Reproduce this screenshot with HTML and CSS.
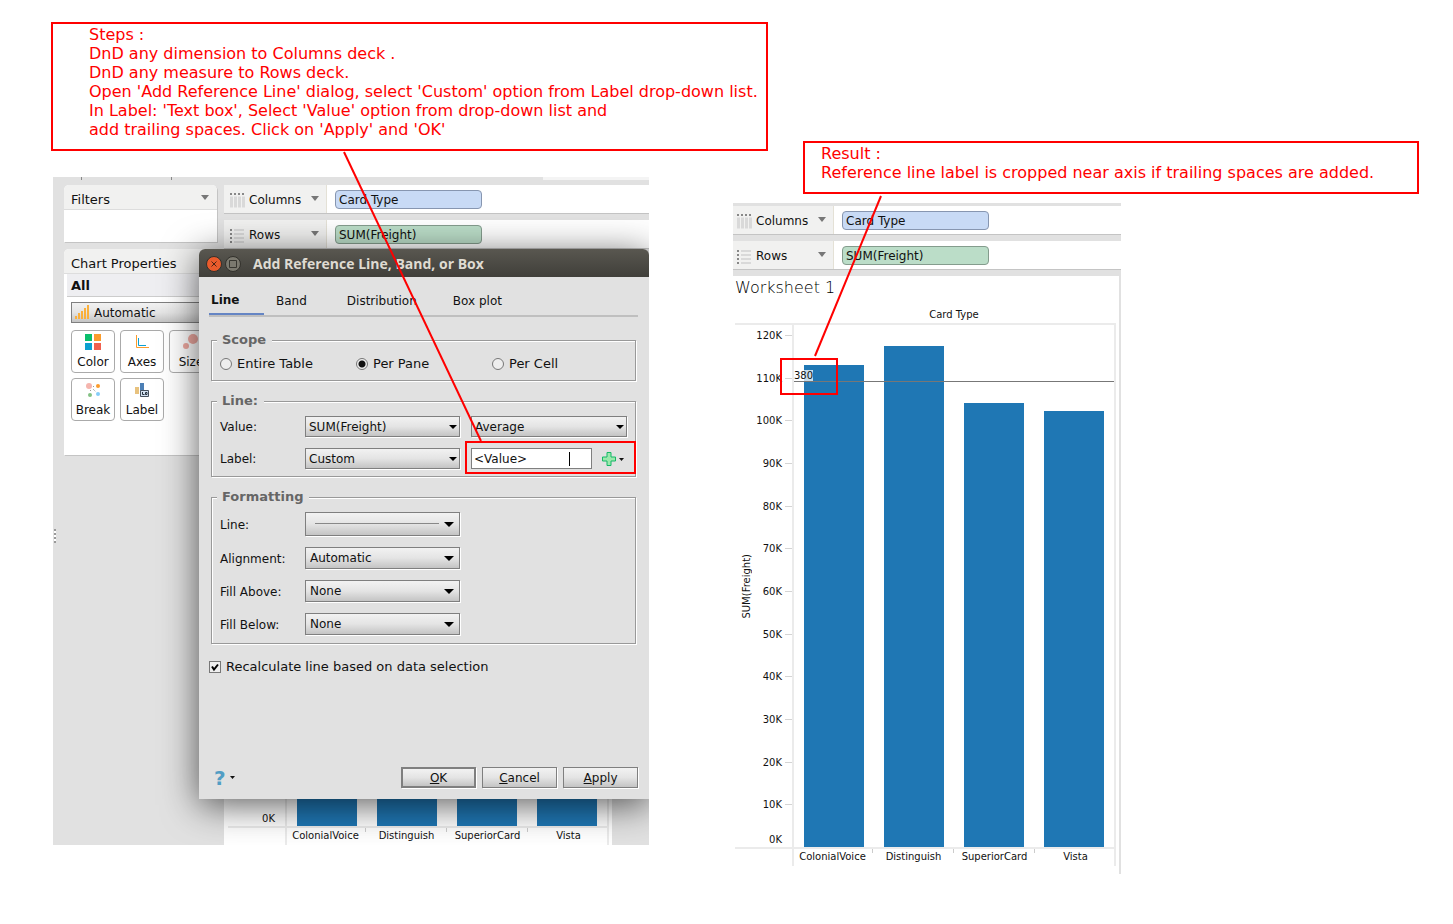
FILE: index.html
```
<!DOCTYPE html>
<html lang="en">
<head>
    <meta charset="UTF-8">
    <meta name="viewport" content="width=device-width, initial-scale=1.0">
    <title>Reference line label is cropped</title>
    <link rel="stylesheet" href="styles.css">
</head>
<body>
    <main class="board">
        <section class="steps">
            <div class="note steps-note">
                <p>Steps :</p>
                <p>DnD any dimension to Columns deck .</p>
                <p>DnD any measure to Rows deck.</p>
                <p>Open 'Add Reference Line' dialog, select 'Custom' option from Label drop-down list.</p>
                <p>In Label: 'Text box', Select 'Value' option from drop-down list and</p>
                <p>add trailing spaces. Click on 'Apply' and 'OK'</p>
                <svg class="pointer steps-pointer" width="140" height="292" viewBox="0 0 140 292"><path d="M1 1L138 290" stroke="#f00" stroke-width="2"/></svg>
            </div>

            <div class="app">
                <aside class="sidebar">
                    <div class="panel filters">
                        <div class="panel-title">Filters <i class="caret"></i></div>
                    </div>
                    <div class="panel properties">
                        <div class="panel-title">Chart Properties</div>
                        <div class="panel-group">All</div>
                        <div class="panel-body">
                            <div class="chart-type">
                                <select class="select" aria-label="Chart type"><option>Automatic</option></select>
                                <svg width="14" height="14" viewBox="0 0 14 14" fill="#fbb03b"><path d="M0 11h2v3H0zM3 8h2v6H3zM6 6h2v8H6zM9 3h2v11H9zM12 0h2v14h-2z"/></svg>
                            </div>
                            <div class="tools">
                                <button class="tool"><svg width="18" height="18" viewBox="0 0 18 18"><path fill="#0bbf6c" d="M1 1h7v7H1z"/><path fill="#fb9c2d" d="M10 1h7v7h-7z"/><path fill="#0ba0d0" d="M1 10h7v7H1z"/><path fill="#f0604f" d="M10 10h7v7h-7z"/></svg>Color</button>
                                <button class="tool"><svg width="18" height="18" viewBox="0 0 18 18" fill="none"><path d="M3.500 2v12.500H16" stroke="#fb9c2d"/><path d="M5.500 5v7.500H13" stroke="#0ba0d0"/></svg>Axes</button>
                                <button class="tool"><svg width="18" height="18" viewBox="0 0 18 18" fill="#f0aaa2"><circle cx="11" cy="6" r="5"/><circle cx="4" cy="13" r="3"/></svg>Size</button>
                                <button class="tool"><svg width="18" height="18" viewBox="0 0 18 18"><circle cx="5" cy="5" r="3" fill="#f5b5ae"/><circle cx="14" cy="5" r="2" fill="#fb9c2d"/><circle cx="6" cy="14" r="2" fill="#83c184"/><circle cx="14" cy="13" r="2" fill="#85cdf8"/><path d="M9 5.500h2M6.500 9v2M9 8l3 3" stroke="#999" stroke-dasharray="1 1"/></svg>Break</button>
                                <button class="tool"><svg width="18" height="18" viewBox="0 0 18 18"><path fill="#e8c27e" d="M2 6h4v7H2z"/><path fill="#4c7fb5" d="M7 2h4v8H7z"/><path d="M7.500 9.500h8v6h-8z" fill="#d5e3f2" stroke="#46505c"/><path d="M9.500 11v2.500h2M12.500 11.500h1.500v2h-1.500z" fill="none" stroke="#25303c"/></svg>Label</button>
                            </div>
                        </div>
                    </div>
                </aside>

                <div class="sheet">
                    <div class="shelf">
                        <div class="shelf-name">
                            <svg width="15" height="15" viewBox="0 0 15 15"><path d="M0 1h15" stroke="#888" stroke-width="2" stroke-dasharray="2 2"/><path d="M0 9h15" stroke="#d9d9d9" stroke-width="11" stroke-dasharray="3 1"/></svg>
                            Columns <i class="caret"></i>
                        </div>
                        <div class="pill dimension">Card Type</div>
                    </div>
                    <div class="shelf">
                        <div class="shelf-name">
                            <svg width="15" height="15" viewBox="0 0 15 15"><path d="M1 1v14" stroke="#888" stroke-width="2" stroke-dasharray="2 2"/><path d="M4 2h10M4 6h10M4 10h10M4 14h10" stroke="#d9d9d9" stroke-width="2"/></svg>
                            Rows <i class="caret"></i>
                        </div>
                        <div class="pill measure">SUM(Freight)</div>
                    </div>
                    <div class="chart">
                        <div class="chart-head"></div>
                        <div class="plot">
                            <div class="axis">
                                <ul class="ticks"><li class="zero">0K</li></ul>
                            </div>
                            <div class="bars">
                                <i style="height: 482px"></i>
                                <i style="height: 501px"></i>
                                <i style="height: 444px"></i>
                                <i style="height: 436px"></i>
                            </div>
                        </div>
                        <div class="names"><span>ColonialVoice</span><span>Distinguish</span><span>SuperiorCard</span><span>Vista</span></div>
                    </div>
                </div>

                <div class="grip"></div>

                <form class="dialog">
                    <header class="titlebar">
                        <button type="button" class="win-button close" aria-label="Close"><svg width="16" height="16" viewBox="0 0 16 16"><circle cx="8" cy="8" r="7.500" fill="#ea5b2c" stroke="#32312c"/><path d="M5.500 5.500l5 5M10.500 5.500l-5 5" stroke="#4a2416"/></svg></button>
                        <button type="button" class="win-button" aria-label="Maximize"><svg width="16" height="16" viewBox="0 0 16 16"><circle cx="8" cy="8" r="7.500" fill="#7b796f" stroke="#32312c"/><path d="M4.500 4.500h7v7h-7z" fill="none" stroke="#383731"/></svg></button>
                        <h1>Add Reference Line, Band, or Box</h1>
                    </header>
                    <nav class="tabs">
                        <button type="button" class="tab active">Line</button>
                        <button type="button" class="tab">Band</button>
                        <button type="button" class="tab">Distribution</button>
                        <button type="button" class="tab">Box plot</button>
                    </nav>
                    <fieldset class="scope">
                        <legend>Scope</legend>
                        <label><input type="radio" name="scope"> Entire Table</label>
                        <label><input type="radio" name="scope" checked> Per Pane</label>
                        <label><input type="radio" name="scope"> Per Cell</label>
                    </fieldset>
                    <fieldset class="line">
                        <legend>Line:</legend>
                        <div class="row">
                            <label for="value">Value:</label>
                            <select class="select" id="value"><option>SUM(Freight)</option></select>
                            <select class="select" aria-label="Aggregation"><option>Average</option></select>
                        </div>
                        <div class="row">
                            <label for="label">Label:</label>
                            <select class="select" id="label"><option>Custom</option></select>
                            <div class="custom">
                                <input class="text" type="text" value="&lt;Value&gt;" aria-label="Label text">
                                <span class="cursor"></span>
                                <button type="button" class="menu-button" aria-label="Insert"><svg width="22" height="14" viewBox="0 0 22 14"><path d="M5 .5h4V5h4.500v4H9v4.500H5V9H.5V5H5z" fill="#9be8ac" stroke="#12b866"/><path d="M17 6h5l-2.500 3z" fill="#111"/></svg></button>
                                <span class="mark label-mark"></span>
                            </div>
                        </div>
                    </fieldset>
                    <fieldset class="formatting">
                        <legend>Formatting</legend>
                        <div class="row">
                            <label for="stroke">Line:</label>
                            <select class="select wide-arrow stroke" id="stroke"><option></option></select>
                        </div>
                        <div class="row">
                            <label for="alignment">Alignment:</label>
                            <select class="select wide-arrow" id="alignment"><option>Automatic</option></select>
                        </div>
                        <div class="row">
                            <label for="above">Fill Above:</label>
                            <select class="select wide-arrow" id="above"><option>None</option></select>
                        </div>
                        <div class="row">
                            <label for="below">Fill Below:</label>
                            <select class="select wide-arrow" id="below"><option>None</option></select>
                        </div>
                    </fieldset>
                    <label class="recalculate"><input type="checkbox" checked> Recalculate line based on data selection</label>
                    <footer class="actions">
                        <button type="button" class="help"><b>?</b><svg width="5" height="3" viewBox="0 0 5 3"><path d="M0 0h5L2.500 3z" fill="#111"/></svg></button>
                        <button type="button" class="button default"><u>O</u>K</button>
                        <button type="button" class="button"><u>C</u>ancel</button>
                        <button type="button" class="button"><u>A</u>pply</button>
                    </footer>
                </form>
            </div>
        </section>

        <section class="result">
            <div class="note result-note">
                <p>Result :</p>
                <p>Reference line label is cropped near axis if trailing spaces are added.</p>
                <svg class="pointer result-pointer" width="70" height="164" viewBox="0 0 70 164"><path d="M68 2L2 162" stroke="#f00" stroke-width="2"/></svg>
            </div>

            <div class="sheet cropped">
                <div class="shelf">
                    <div class="shelf-name">
                        <svg width="15" height="15" viewBox="0 0 15 15"><path d="M0 1h15" stroke="#888" stroke-width="2" stroke-dasharray="2 2"/><path d="M0 9h15" stroke="#d9d9d9" stroke-width="11" stroke-dasharray="3 1"/></svg>
                        Columns <i class="caret"></i>
                    </div>
                    <div class="pill dimension">Card Type</div>
                </div>
                <div class="shelf">
                    <div class="shelf-name">
                        <svg width="15" height="15" viewBox="0 0 15 15"><path d="M1 1v14" stroke="#888" stroke-width="2" stroke-dasharray="2 2"/><path d="M4 2h10M4 6h10M4 10h10M4 14h10" stroke="#d9d9d9" stroke-width="2"/></svg>
                        Rows <i class="caret"></i>
                    </div>
                    <div class="pill measure">SUM(Freight)</div>
                </div>
                <div class="chart">
                    <div class="chart-head">
                        <h2>Worksheet 1</h2>
                        <p>Card Type</p>
                    </div>
                    <div class="plot">
                        <div class="axis">
                            <span class="axis-title">SUM(Freight)</span>
                            <ul class="ticks">
                                <li>120K</li>
                                <li>110K</li>
                                <li>100K</li>
                                <li>90K</li>
                                <li>80K</li>
                                <li>70K</li>
                                <li>60K</li>
                                <li>50K</li>
                                <li>40K</li>
                                <li>30K</li>
                                <li>20K</li>
                                <li>10K</li>
                                <li class="zero">0K</li>
                            </ul>
                        </div>
                        <div class="bars">
                            <i style="height: 482px"></i>
                            <i style="height: 501px"></i>
                            <i style="height: 444px"></i>
                            <i style="height: 436px"></i>
                            <div class="reference-line"><span>380</span></div>
                            <span class="mark crop-mark"></span>
                        </div>
                    </div>
                    <div class="names"><span>ColonialVoice</span><span>Distinguish</span><span>SuperiorCard</span><span>Vista</span></div>
                </div>
            </div>
        </section>
    </main>
</body>
</html>
```
FILE: styles.css
```
* {
    margin: 0;
    padding: 0;
    box-sizing: border-box;
}

body {
    background-color: #fff;
    color: #111;
    font-family: "DejaVu Sans", Verdana, sans-serif;
    font-size: 13px;
}

button, input, select {
    font: inherit;
    color: inherit;
}

button {
    background: none;
    border: none;
}

ul {
    list-style: none;
}

.board {
    display: flex;
    align-items: flex-start;
    padding: 22px 34px 50px 51px;
}

.steps {
    flex: 682 1 0;
    min-width: 0;
}

.result {
    flex: 686 1 0;
    min-width: 0;
    padding-top: 119px;
}

/* red annotations */
.note {
    position: relative;
    border: 2px solid #f00;
    padding: 1px 8px 10px 36px;
    color: #f00;
    font-size: 16px;
    line-height: 19px;
}

.steps-note {
    width: max-content;
    z-index: 5;
}

.result-note {
    margin: 0 0 9px 70px;
    padding-left: 16px;
    z-index: 5;
}

.pointer {
    position: absolute;
    pointer-events: none;
}

.steps-pointer {
    left: 290px;
    top: 127px;
}

.result-pointer {
    left: 8px;
    top: 51px;
}

.mark {
    position: absolute;
    border: 2px solid #f00;
    pointer-events: none;
}

/* application window */
.app {
    position: relative;
    display: flex;
    gap: 7px;
    width: 87.4%;
    margin: 26px 0 0 2px;
    padding: 8px 0 0 11px;
    background:
        linear-gradient(#888, #888) 28px 0 / 1px 3px no-repeat,
        linear-gradient(#888, #888) 118px 0 / 1px 3px no-repeat,
        linear-gradient(#f4f4f4, #f4f4f4) 490px 0 / 106px 3px no-repeat,
        #e1e1e1;
    overflow: hidden;
}

.sidebar {
    flex: 0 0 153px;
}

.panel {
    background-color: #fff;
    border-radius: 5px 5px 0 0;
    box-shadow: 1px 1px 0 #c4c4c4;
    overflow: hidden;
}

.filters {
    height: 57px;
    margin-bottom: 7px;
}

.properties {
    height: 206px;
}

.panel-title {
    display: flex;
    justify-content: space-between;
    align-items: center;
    height: 25px;
    padding: 4px 8px 0 7px;
    background-color: #f1f1f0;
    border-bottom: 1px solid #ddd;
}

.panel-group {
    height: 23px;
    margin-left: 3px;
    padding-left: 4px;
    line-height: 24px;
    font-weight: bold;
    background-color: #eeeef1;
    border-bottom: 1px solid #ccc;
}

.panel-body {
    padding: 5px 0 0 7px;
}

.caret {
    border: 4px solid transparent;
    border-top: 5px solid #777;
    border-bottom: none;
}

.panel-title .caret {
    margin-bottom: 4px;
}

.chart-type {
    position: relative;
    display: flex;
}

.chart-type .select {
    flex: 1;
    padding-left: 22px;
}

.chart-type svg {
    position: absolute;
    left: 4px;
    top: 3px;
}

.tools {
    display: grid;
    grid-template-columns: repeat(3, 44px);
    gap: 5px;
    margin-top: 7px;
}

.tool {
    display: flex;
    flex-direction: column;
    align-items: center;
    gap: 3px;
    height: 43px;
    padding-top: 2px;
    border: 1px solid #aaa;
    border-radius: 4px;
    background-color: #fff;
    font-size: 12px;
    line-height: 16px;
}

.grip {
    position: absolute;
    left: 1px;
    top: 352px;
    width: 2px;
    height: 14px;
    background: repeating-linear-gradient(#999 0 2px, #fff 2px 4px);
}

/* worksheet */
.sheet {
    flex: 1;
    min-width: 0;
}

.shelf {
    display: flex;
    align-items: center;
    height: 28px;
    margin-bottom: 7px;
    background-color: #fff;
    box-shadow: 0 1px 0 #c4c4c4;
    font-size: 12px;
}

.shelf-name {
    display: flex;
    align-items: center;
    align-self: stretch;
    gap: 4px;
    width: 103px;
    margin-right: 8px;
    padding: 2px 7px 0 6px;
    background-color: #f1f1f0;
    border-right: 1px solid #e4e1d6;
}

.shelf-name .caret {
    margin: 0 0 3px auto;
}

.pill {
    width: 147px;
    height: 19px;
    padding-left: 3px;
    line-height: 18px;
    border: 1px solid #8796b0;
    border-radius: 4px;
    background-color: #c8daf5;
}

.pill.measure {
    border-color: #849c8d;
    background-color: #bbddc8;
}

.chart {
    width: 390px;
    padding: 0 3px 0 4px;
    background-color: #fff;
    border-right: 2px solid #e1e1e1;
    font-size: 10px;
}

.chart-head {
    height: 49px;
    border-bottom: 2px solid #ebebeb;
}

.chart-head h2 {
    height: 24px;
    color: #000;
    font-family: "DejaVu Sans Light", "DejaVu Sans", sans-serif;
    font-size: 16px;
    font-weight: 200;
    line-height: 23px;
}

.chart-head p {
    padding-left: 57px;
    line-height: 30px;
    text-align: center;
}

.plot {
    display: flex;
    height: 522px;
}

.axis {
    display: flex;
    align-items: center;
    flex: 0 0 57px;
    min-width: 0;
}

.axis-title {
    flex: none;
    width: 24px;
    line-height: 24px;
    writing-mode: vertical-rl;
    transform: rotate(180deg);
}

.ticks {
    flex: 1;
    display: flex;
    flex-direction: column;
    min-width: 0;
    height: 100%;
    padding-top: 4px;
    line-height: 14px;
    text-align: right;
}

.ticks li {
    flex: 1;
    display: flex;
    justify-content: flex-end;
    gap: 3px;
}

.ticks li::after {
    content: "";
    flex: none;
    width: 7px;
    height: 1px;
    margin-top: 6px;
    background-color: #d4d4d4;
}

.ticks .zero {
    flex: 0 0 14px;
    margin-top: auto;
}

.ticks li + .zero {
    margin-top: -8px;
}

.ticks .zero::after {
    background: none;
}

.bars {
    position: relative;
    flex: 1;
    display: grid;
    grid-template-columns: repeat(4, 1fr);
    align-items: end;
    justify-items: center;
    border: 2px solid #ebebeb;
    border-width: 0 2px;
}

.bars i {
    width: 75%;
    background-color: #1f77b4;
}

.reference-line {
    position: absolute;
    left: 0;
    right: 0;
    top: 45px;
    height: 12px;
    border-bottom: 1px solid #777;
    line-height: 11px;
}

.reference-line span {
    display: inline-block;
    height: 11px;
    background-color: rgba(255, 255, 255, 0.75);
}

.crop-mark {
    left: -14px;
    top: 33px;
    width: 58px;
    height: 37px;
}

.names {
    display: grid;
    grid-template-columns: repeat(4, 1fr);
    height: 19px;
    padding-left: 57px;
    border-top: 2px solid #ebebeb;
    line-height: 15px;
    text-align: center;
    background:
        linear-gradient(#ebebeb, #ebebeb) 57px 0 / 2px 100% no-repeat,
        linear-gradient(#ebebeb, #ebebeb) 100% 0 / 2px 100% no-repeat;
}

.names span {
    background: linear-gradient(#ccc, #ccc) 100% 0 / 1px 4px no-repeat;
}

.names span:last-child {
    background: none;
}

.cropped {
    width: 388px;
    border-top: 3px solid #e1e1e1;
    background-color: #e1e1e1;
}

.cropped .shelf-name {
    width: 101px;
    padding-left: 4px;
}

.cropped .chart {
    width: 388px;
    padding: 0 3px 8px 2px;
}

/* dialog */
.dialog {
    position: absolute;
    top: 72px;
    right: 0;
    bottom: 46px;
    left: 146px;
    display: flex;
    flex-direction: column;
    padding: 0 11px 11px 10px;
    background-color: #e1e1e1;
    border-radius: 6px 6px 0 0;
    box-shadow: 0 6px 36px rgba(0, 0, 0, 0.65);
}

.titlebar {
    display: flex;
    align-items: center;
    gap: 3px;
    height: 28px;
    margin: 0 -11px 0 -10px;
    padding: 1px 7px 0;
    background: linear-gradient(#595750, #403f3a);
    border-radius: 6px 6px 0 0;
    color: #dfdbd2;
}

.titlebar h1 {
    margin-left: 9px;
    font-family: "Open Sans", sans-serif;
    font-size: 14px;
    font-weight: bold;
}

.win-button {
    width: 16px;
    height: 16px;
}

.win-button svg {
    display: block;
}

.tabs {
    display: flex;
    height: 40px;
    border-bottom: 2px solid #bfbfbf;
    font-size: 12px;
}

.tab {
    padding: 9px 12px 0;
    margin-right: 16px;
}

.tab.active {
    width: 55px;
    margin-right: 0;
    padding: 10px 0 0 2px;
    text-align: left;
    font-weight: bold;
    border-bottom: 2px solid #6585c4;
}

.tab:nth-child(3) {
    margin-right: 12px;
}

fieldset {
    margin: 0 2px;
    border: 1px solid #999;
    box-shadow: 1px 1px 0 #fff, inset 1px 1px 0 #fff;
}

legend {
    margin-left: -3px;
    padding: 0 6px 0 5px;
    background-color: #e1e1e1;
    color: #666;
    font-weight: bold;
    line-height: 16px;
}

.scope {
    display: grid;
    grid-template-columns: 136px 136px 1fr;
    margin-top: 15px;
    padding: 8px 8px 8px;
}

.scope label, .recalculate {
    display: flex;
    align-items: center;
    gap: 5px;
    line-height: 16px;
}

input[type="radio"], input[type="checkbox"] {
    appearance: none;
    width: 12px;
    height: 12px;
    border: 1px solid #777;
    background-color: #eee;
}

input[type="radio"] {
    border-radius: 50%;
}

input[type="radio"]:checked {
    background: radial-gradient(circle, #111 0 3px, #eee 4px);
}

input[type="checkbox"]:checked {
    background: #eee url("data:image/svg+xml,%3Csvg xmlns='http://www.w3.org/2000/svg' viewBox='0 0 10 10'%3E%3Cpath d='M2 4.500l2 3 4-5' fill='none' stroke='%23000' stroke-width='2'/%3E%3C/svg%3E") center / 10px no-repeat;
}

.line {
    margin-top: 12px;
    padding: 7px 8px 7px;
}

.row {
    display: grid;
    grid-template-columns: 85px 155px 156px;
    align-items: center;
    font-size: 12px;
}

.row label {
    padding-top: 1px;
}

.row > :nth-child(3) {
    margin-left: 11px;
    margin-right: -11px;
}

.row + .row {
    margin-top: 11px;
}

.select {
    appearance: none;
    height: 21px;
    padding: 0 14px 0 3px;
    border: 1px solid #7f7f7f;
    border-radius: 0;
    box-shadow: 1px 1px 0 #fff;
    font-size: 12px;
    background:
        url("data:image/svg+xml,%3Csvg xmlns='http://www.w3.org/2000/svg' viewBox='0 0 8 4'%3E%3Cpath d='M0 0h8L4 4z'/%3E%3C/svg%3E") right 2px center / 8px 4px no-repeat,
        linear-gradient(#f2f2f2, #e4e4e4 50%, #c4c4c4);
}

.custom {
    position: relative;
    display: flex;
    align-items: center;
    gap: 10px;
}

.text {
    width: 121px;
    height: 21px;
    padding-left: 2px;
    border: 1px solid #7f7f7f;
    background-color: #fff;
}

.cursor {
    position: absolute;
    left: 98px;
    top: 4px;
    width: 1px;
    height: 14px;
    background-color: #000;
}

.menu-button svg {
    display: block;
}

.label-mark {
    top: -7px;
    right: -9px;
    bottom: -5px;
    left: -6px;
}

.formatting {
    margin-top: 12px;
    padding: 7px 8px 8px;
}

.formatting .row + .row {
    margin-top: 11px;
}

.wide-arrow {
    height: 22px;
    padding-left: 4px;
    background:
        url("data:image/svg+xml,%3Csvg xmlns='http://www.w3.org/2000/svg' viewBox='0 0 10 5'%3E%3Cpath d='M0 0h10L5 5z'/%3E%3C/svg%3E") right 5px center / 10px 5px no-repeat,
        linear-gradient(#f2f2f2, #e4e4e4 50%, #c4c4c4);
}

.stroke {
    height: 24px;
    background:
        url("data:image/svg+xml,%3Csvg xmlns='http://www.w3.org/2000/svg' viewBox='0 0 10 5'%3E%3Cpath d='M0 0h10L5 5z'/%3E%3C/svg%3E") right 5px center / 10px 5px no-repeat,
        linear-gradient(#888, #888) 9px 10px / 124px 1px no-repeat,
        linear-gradient(#f2f2f2, #e4e4e4 50%, #c4c4c4);
}

.recalculate {
    margin-top: 15px;
}

.actions {
    display: flex;
    align-items: center;
    gap: 6px;
    margin-top: auto;
}

.help {
    display: flex;
    align-items: center;
    gap: 4px;
    margin-right: auto;
    padding-left: 5px;
    color: #519dc4;
    font-size: 20px;
    line-height: 20px;
}

.button {
    width: 75px;
    height: 21px;
    border: 1px solid #7f7f7f;
    box-shadow: 1px 1px 0 #fff;
    font-size: 12px;
    background: linear-gradient(#f2f2f2, #e4e4e4 50%, #c4c4c4);
}

.button.default {
    border-width: 2px;
}
```
